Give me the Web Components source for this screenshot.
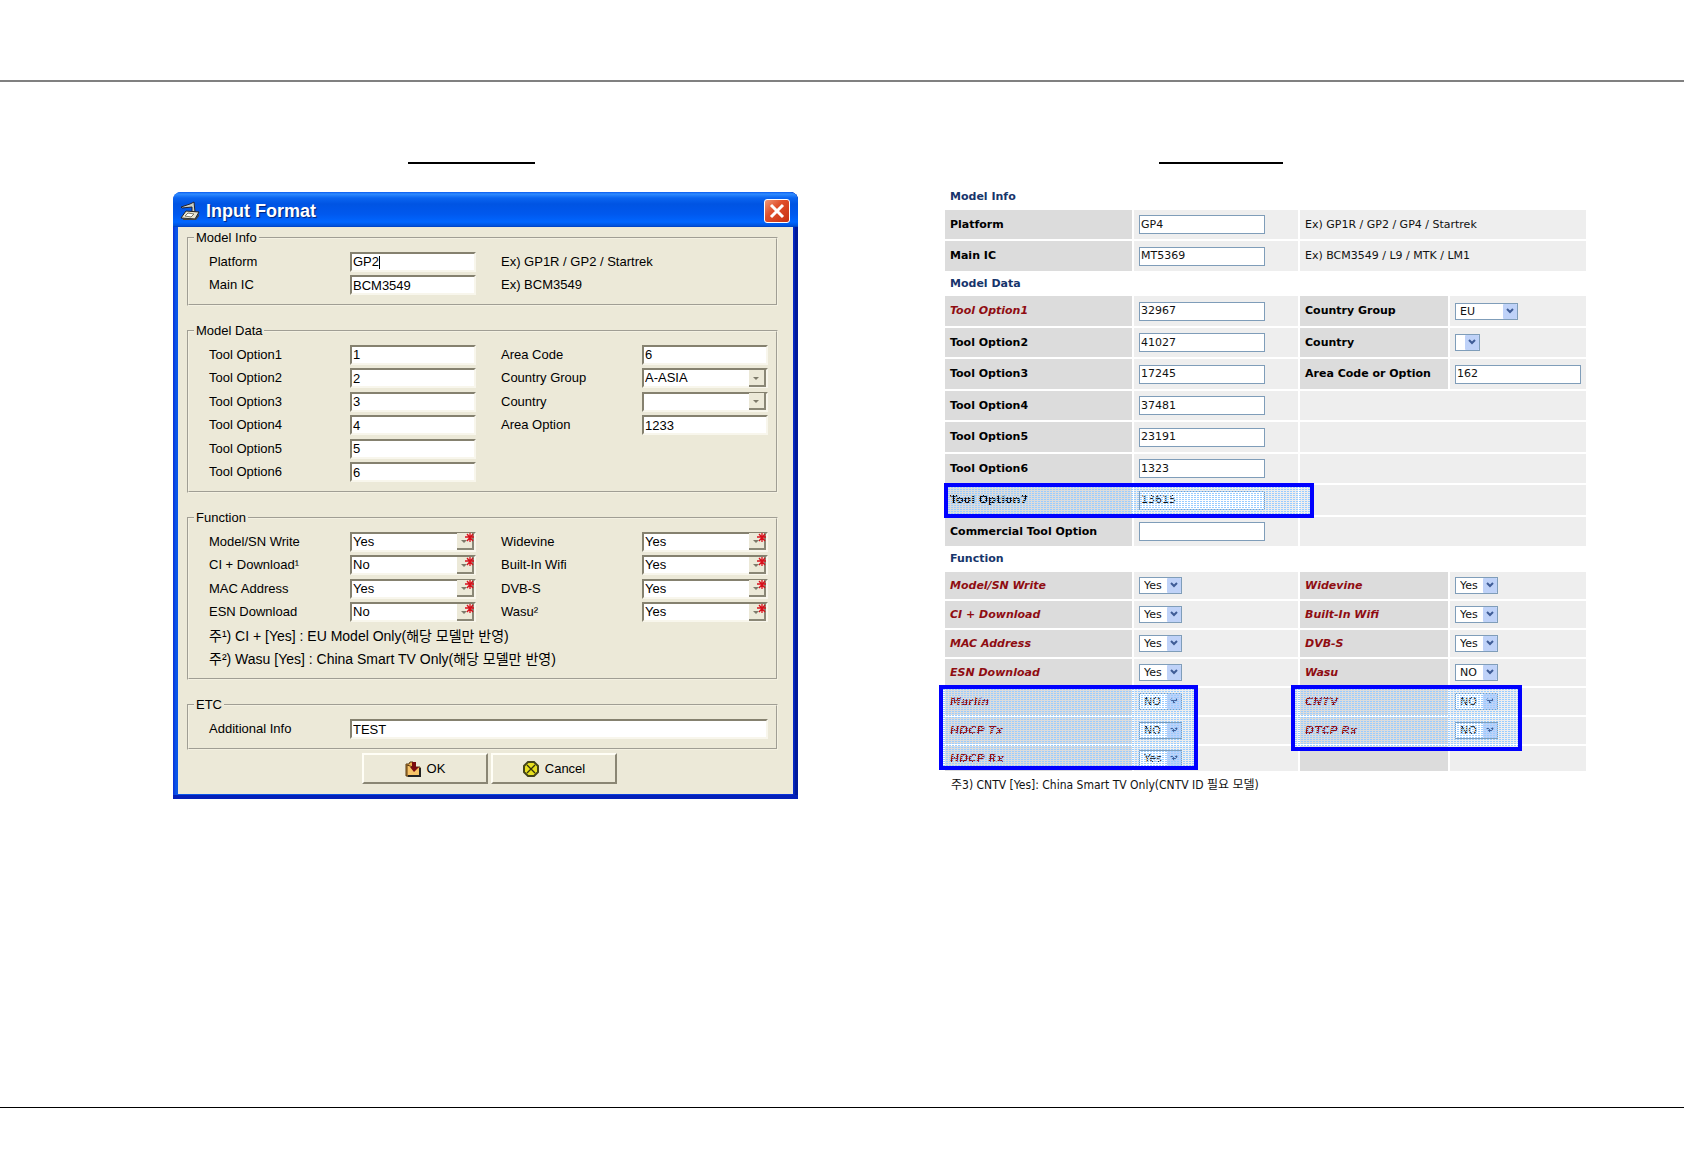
<!DOCTYPE html>
<html lang="ko">
<head>
<meta charset="utf-8">
<title>Input Format</title>
<style>
    body {
        margin: 0;
        background: #fff;
        font-family: "Liberation Sans", "Noto Sans CJK KR", sans-serif;
    }
</style>
</head>
<body>
<doc-page>
    <doc-figure style="--rule-start: 235px; --rule-width: 127px; --gap: 28px">
        <xp-window heading="Input Format">
            <xp-group legend="Model Info" rows="2">
                <xp-field label="Platform" value="GP2" caret></xp-field>
                <xp-note>Ex) GP1R / GP2 / Startrek</xp-note>
                <xp-field label="Main IC" value="BCM3549"></xp-field>
                <xp-note>Ex) BCM3549</xp-note>
            </xp-group>
            <xp-group legend="Model Data" rows="6">
                <xp-field label="Tool Option1" value="1"></xp-field>
                <xp-field label="Area Code" value="6"></xp-field>
                <xp-field label="Tool Option2" value="2"></xp-field>
                <xp-field label="Country Group" value="A-ASIA" type="select"></xp-field>
                <xp-field label="Tool Option3" value="3"></xp-field>
                <xp-field label="Country" value="" type="select"></xp-field>
                <xp-field label="Tool Option4" value="4"></xp-field>
                <xp-field label="Area Option" value="1233"></xp-field>
                <xp-field label="Tool Option5" value="5" class="alone"></xp-field>
                <xp-field label="Tool Option6" value="6" class="alone"></xp-field>
            </xp-group>
            <xp-group legend="Function" rows="6">
                <xp-field label="Model/SN Write" value="Yes" type="select" required></xp-field>
                <xp-field label="Widevine" value="Yes" type="select" required></xp-field>
                <xp-field label="CI + Download¹" value="No" type="select" required></xp-field>
                <xp-field label="Built-In Wifi" value="Yes" type="select" required></xp-field>
                <xp-field label="MAC Address" value="Yes" type="select" required></xp-field>
                <xp-field label="DVB-S" value="Yes" type="select" required></xp-field>
                <xp-field label="ESN Download" value="No" type="select" required></xp-field>
                <xp-field label="Wasu²" value="Yes" type="select" required></xp-field>
                <xp-note class="wide">주¹) CI + [Yes] : EU Model Only(해당 모델만 반영)</xp-note>
                <xp-note class="wide">주²) Wasu [Yes] : China Smart TV Only(해당 모델만 반영)</xp-note>
            </xp-group>
            <xp-group legend="ETC" rows="1">
                <xp-field label="Additional Info" value="TEST" class="wide"></xp-field>
            </xp-group>
            <xp-button slot="actions" icon="ok">OK</xp-button>
            <xp-button slot="actions" icon="cancel">Cancel</xp-button>
        </xp-window>
    </doc-figure>
    <doc-figure style="--rule-start: 216px; --rule-width: 124px; --gap: 20px">
        <option-sheet>주3) CNTV [Yes]: China Smart TV Only(CNTV ID 필요 모델)</option-sheet>
    </doc-figure>
</doc-page>

<script>
class DocPage extends HTMLElement {
    constructor() {
        super();
        this.attachShadow({ mode: 'open' });
    }

    connectedCallback() {
        this.shadowRoot.innerHTML = `
        <style>
            :host {
                display: flex;
                flex-direction: column;
                min-height: 100vh;
            }
            header {
                height: 80px;
                border-bottom: 2px solid #808080;
            }
            main {
                flex: 1;
                display: grid;
                grid-template-columns: 625fr 645fr;
                column-gap: 145px;
                align-items: start;
                padding: 80px 96px 0 173px;
            }
            footer {
                height: 58px;
                border-top: 1px solid #000;
            }
        </style>
        <header></header>
        <main><slot></slot></main>
        <footer></footer>
        `;
    }
}
customElements.define('doc-page', DocPage);

class DocFigure extends HTMLElement {
    constructor() {
        super();
        this.attachShadow({ mode: 'open' });
    }

    connectedCallback() {
        this.shadowRoot.innerHTML = `
        <style>
            :host {
                display: flex;
                flex-direction: column;
                gap: var(--gap);
                min-width: 0;
            }
            .rule {
                width: var(--rule-width);
                height: 2px;
                margin-left: var(--rule-start);
                background: #000;
            }
        </style>
        <div class="rule"></div>
        <slot></slot>
        `;
    }
}
customElements.define('doc-figure', DocFigure);

class XpWindow extends HTMLElement {
    constructor() {
        super();
        this.attachShadow({ mode: 'open' });
    }

    connectedCallback() {
        this.shadowRoot.innerHTML = `
        <style>
            :host {
                display: block;
                padding: 0 5px 5px;
                border-radius: 8px 8px 0 0;
                background: linear-gradient(90deg, #0831d9, #0a55e8 3px, #0a4ae0 50%, #0831d9 99%, #00138c);
                box-shadow: inset 0 -4px 0 #0420b8, inset -3px 0 0 #001a9c;
                overflow: hidden;
            }
            .bar {
                display: flex;
                align-items: center;
                gap: 6px;
                height: 35px;
                margin: 0 -5px;
                padding: 2px 8px 0 7px;
                box-sizing: border-box;
                background: linear-gradient(#0a5cf0, #2f8bff 2px, #0a64f0 6px, #0054e3 12px, #0058ee 22px, #0066ff 30px, #0050d8 34px, #003cb8);
            }
            h1 {
                flex: 1;
                margin: 0;
                font-size: 18px;
                line-height: 24px;
                color: #fff;
                text-shadow: 1px 1px 1px #00237a;
            }
            .close {
                display: grid;
                place-items: center;
                width: 26px;
                height: 24px;
                padding: 0;
                border: 1px solid #fff;
                border-radius: 3px;
                background: linear-gradient(135deg, #f09878, #e0502c 40%, #c83010);
            }
            svg {
                display: block;
            }
            .body {
                padding: 3px 15px 10px 9px;
                background: #ece9d8;
            }
            .groups {
                display: flex;
                flex-direction: column;
                gap: 17px;
            }
            .actions {
                display: flex;
                gap: 3px;
                margin-top: 3px;
                padding-left: 175px;
            }
        </style>
        <div class="bar">
            <svg width="20" height="20" viewBox="0 0 20 20">
                <path d="M1 6 L10 3 L14 1 L15 11 L12 11 L12 6 L2 7 Z" fill="#c8d0c8" stroke="#223" stroke-width="1"/>
                <path d="M1 17 L6 10 L19 11 L15 18 Z" fill="#e8e4d0" stroke="#222" stroke-width="1"/>
                <path d="M5 15 L8 12 L14 13 L11 16 Z" fill="#fff" stroke="#776" stroke-width="1"/>
                <path d="M3 17 L15 18 L19 13 V15 L16 19 H3 Z" fill="#444"/>
            </svg>
            <h1>${this.getAttribute('heading')}</h1>
            <button class="close" type="button" aria-label="Close">
                <svg width="16" height="16" viewBox="0 0 16 16">
                    <path d="M2 2 L14 14 M14 2 L2 14" stroke="#fff" stroke-width="3"/>
                </svg>
            </button>
        </div>
        <div class="body">
            <div class="groups"><slot></slot></div>
            <div class="actions"><slot name="actions"></slot></div>
        </div>
        `;
    }
}
customElements.define('xp-window', XpWindow);

class XpGroup extends HTMLElement {
    constructor() {
        super();
        this.attachShadow({ mode: 'open' });
    }

    connectedCallback() {
        const rows = Number(this.getAttribute('rows'));
        // two rows take 47px together
        const height = Math.ceil(rows * 47 / 2);
        this.shadowRoot.innerHTML = `
        <style>
            :host {
                display: block;
                font-size: 13px;
            }
            fieldset {
                min-width: 0;
                margin: 0;
                padding: 4px 8px 7px 20px;
                border: 2px groove #f4f1e2;
            }
            legend {
                height: 16px;
                margin-left: -15px;
                padding: 0 2px;
                line-height: 16px;
            }
            .rows {
                display: grid;
                grid-template-columns: 267fr 267fr;
                grid-template-rows: repeat(${rows}, 1fr);
                column-gap: 25px;
                align-items: center;
                height: ${height}px;
            }
            ::slotted(.alone) {
                grid-column: 1;
            }
            ::slotted(.wide) {
                grid-column: 1 / -1;
            }
        </style>
        <fieldset>
            <legend>${this.getAttribute('legend')}</legend>
            <div class="rows"><slot></slot></div>
        </fieldset>
        `;
    }
}
customElements.define('xp-group', XpGroup);

class XpNote extends HTMLElement {
    constructor() {
        super();
        this.attachShadow({ mode: 'open' });
    }

    connectedCallback() {
        this.shadowRoot.innerHTML = `
        <style>
            :host {
                display: block;
                line-height: 20px;
                white-space: nowrap;
            }
            :host(.wide) {
                font-size: 14px;
            }
        </style>
        <slot></slot>
        `;
    }
}
customElements.define('xp-note', XpNote);

class XpField extends HTMLElement {
    constructor() {
        super();
        this.attachShadow({ mode: 'open' });
    }

    control() {
        const value = this.getAttribute('value');
        if (this.getAttribute('type') !== 'select') {
            return `<input id="control" type="text" value="${value}">`;
        }
        return `
            <select id="control"><option>${value}</option></select>
            <svg class="drop" width="17" height="17" viewBox="0 0 17 17">
                <path d="M0 0 H17 V17 H0 Z" fill="#ece9d8"/>
                <path d="M0 16 H16 V0" fill="none" stroke="#8a8776" stroke-width="2"/>
                <path d="M4 7 H10 L7 10 Z" fill="#7d7a6a"/>
                ${this.hasAttribute('required') ? `
                <path d="M13 0 V9 M8 4 H17 M10 1 L16 8 M16 1 L10 8" stroke="#d8101c" stroke-width="1.3"/>` : ''}
            </svg>`;
    }

    connectedCallback() {
        this.shadowRoot.innerHTML = `
        <style>
            :host {
                display: grid;
                grid-template-columns: 141fr 126fr;
                align-items: center;
                line-height: 20px;
                white-space: nowrap;
            }
            :host(.wide) {
                grid-template-columns: 141fr 418fr;
            }
            .box {
                display: grid;
                position: relative;
                min-width: 0;
            }
            input, select {
                grid-area: 1 / 1;
                width: 100%;
                height: 20px;
                box-sizing: border-box;
                margin: 0;
                padding: 0 1px;
                border: 2px solid;
                border-color: #85816f #f8f6ec #f8f6ec #85816f;
                border-radius: 0;
                background: #fff;
                color: #000;
                font: inherit;
                line-height: 16px;
                appearance: none;
                outline: none;
            }
            .drop {
                grid-area: 1 / 1;
                justify-self: end;
                align-self: center;
                margin-right: 2px;
                pointer-events: none;
            }
            .caret {
                position: absolute;
                left: 29px;
                top: 4px;
                width: 1px;
                height: 13px;
                background: #000;
            }
        </style>
        <label for="control">${this.getAttribute('label')}</label>
        <div class="box">
            ${this.control()}
            ${this.hasAttribute('caret') ? '<span class="caret"></span>' : ''}
        </div>
        `;
    }
}
customElements.define('xp-field', XpField);

const ICONS = {
    ok: `
        <path d="M1 3 H4 L5 1 H8 V15 H1 Z" fill="#f0b050" stroke="#5a3a10" stroke-width="1"/>
        <path d="M2 4 L8 6 H15 V15 H2 Z" fill="#f8c468" stroke="#5a3a10" stroke-width="1"/>
        <path d="M15 7 V15 H3" fill="none" stroke="#222" stroke-width="2"/>
        <path d="M7 1 H11 V6 H14 L9 11 L5 6 H7 Z" fill="#7a0c10"/>`,
    cancel: `
        <path d="M5 1 H11 L15 5 V11 L11 15 H5 L1 11 V5 Z" fill="#e8e020" stroke="#45451a" stroke-width="2"/>
        <path d="M4 4 L12 12 M12 4 L4 12" stroke="#33330c" stroke-width="1.3"/>`
};

class XpButton extends HTMLElement {
    constructor() {
        super();
        this.attachShadow({ mode: 'open' });
    }

    connectedCallback() {
        this.shadowRoot.innerHTML = `
        <style>
            :host {
                display: block;
                flex: 0 1 126px;
            }
            button {
                display: flex;
                align-items: center;
                justify-content: center;
                gap: 6px;
                width: 100%;
                height: 31px;
                padding: 0;
                border: 2px solid;
                border-color: #fffef6 #8a8674 #8a8674 #fffef6;
                background: #ece9d8;
                color: #000;
                font: 13px "Liberation Sans", sans-serif;
            }
        </style>
        <button type="button">
            <svg width="16" height="16" viewBox="0 0 16 16">${ICONS[this.getAttribute('icon')]}</svg>
            <slot></slot>
        </button>
        `;
    }
}
customElements.define('xp-button', XpButton);

// [label, control, value, changed, size]
const INFO = [
    [['Platform', 'text', 'GP4'], 'Ex) GP1R / GP2 / GP4 / Startrek'],
    [['Main IC', 'text', 'MT5369'], 'Ex) BCM3549 / L9 / MTK / LM1']
];
const DATA = [
    [['Tool Option1', 'text', '32967', true], ['Country Group', 'select', 'EU', false, 'group']],
    [['Tool Option2', 'text', '41027'], ['Country', 'select', '', false, 'empty']],
    [['Tool Option3', 'text', '17245'], ['Area Code or Option', 'text', '162']],
    [['Tool Option4', 'text', '37481'], ''],
    [['Tool Option5', 'text', '23191'], ''],
    [['Tool Option6', 'text', '1323'], ''],
    [['Tool Option7', 'text', '13615'], ''],
    [['Commercial Tool Option', 'text', ''], '']
];
const FUNCTIONS = [
    [['Model/SN Write', 'select', 'Yes', true], ['Widevine', 'select', 'Yes', true]],
    [['CI + Download', 'select', 'Yes', true], ['Built-In Wifi', 'select', 'Yes', true]],
    [['MAC Address', 'select', 'Yes', true], ['DVB-S', 'select', 'Yes', true]],
    [['ESN Download', 'select', 'Yes', true], ['Wasu', 'select', 'NO', true]],
    [['Marlin', 'select', 'NO', true], ['CNTV', 'select', 'NO', true]],
    [['HDCP Tx', 'select', 'NO', true], ['DTCP Rx', 'select', 'NO', true]],
    [['HDCP Rx', 'select', 'Yes', true], null]
];

class OptionSheet extends HTMLElement {
    constructor() {
        super();
        this.attachShadow({ mode: 'open' });
    }

    pair([label, type, value, changed, size = '']) {
        const id = label.toLowerCase().replace(/[^a-z0-9]+/g, '-');
        const control = type === 'text'
            ? `<input id="${id}" type="text" value="${value}">`
            : `<span class="select ${size}">
                    <select id="${id}"><option>${value}</option></select>
                    <svg width="14" height="15" viewBox="0 0 14 15">
                        <rect width="14" height="15" rx="1" fill="#bfd2f8"/>
                        <path d="M4 5 L7 8 L10 5" fill="none" stroke="#3f5c96" stroke-width="2"/>
                    </svg>
                </span>`;
        return `
            <th scope="row" class="${changed ? 'changed' : ''}"><label for="${id}">${label}</label></th>
            <td>${control}</td>`;
    }

    row([left, right]) {
        let rest = '<th></th><td></td>';
        if (Array.isArray(right)) {
            rest = this.pair(right);
        } else if (right !== null) {
            rest = `<td colspan="2">${right}</td>`;
        }
        return `<tr>${this.pair(left)}${rest}</tr>`;
    }

    section(name, title, rows) {
        return `
            <tbody class="${name}">
                <tr class="title"><th colspan="4" scope="rowgroup">${title}</th></tr>
                ${rows.map(row => this.row(row)).join('')}
            </tbody>`;
    }

    connectedCallback() {
        this.shadowRoot.innerHTML = `
        <style>
            :host {
                display: block;
                position: relative;
                font: 11px/16px "DejaVu Sans", "Noto Sans CJK KR", sans-serif;
                color: #111;
            }
            table {
                width: 100%;
                table-layout: fixed;
                border-spacing: 2px;
            }
            .c1 { width: 187px; }
            .c2 { width: 164px; }
            .c3 { width: 148px; }
            th, td {
                height: 29px;
                padding: 0 5px;
                text-align: left;
                vertical-align: middle;
                white-space: nowrap;
            }
            th {
                background: #dcdcdc;
                color: #000;
            }
            td {
                background: #eee;
            }
            .data tr:nth-child(even) > *, .info tr:last-child > * {
                height: 30px;
            }
            .functions tr > * {
                height: 27px;
            }
            .functions tr:last-child > * {
                height: 25px;
            }
            tr.title > th {
                height: 22px;
                background: none;
                color: #17356b;
            }
            .data tr.title > th {
                height: 21px;
            }
            .changed {
                color: #8f0d12;
                font-style: italic;
            }
            input, select {
                display: block;
                box-sizing: border-box;
                margin: 0;
                border: 1px solid #7f9db9;
                border-radius: 0;
                background: #fff;
                color: #111;
                font: inherit;
                appearance: none;
                outline: none;
            }
            input {
                width: 126px;
                height: 19px;
                padding: 0 1px 1px;
            }
            .select {
                display: grid;
                width: 43px;
            }
            .select.group { width: 63px; }
            .select.empty { width: 25px; }
            select {
                grid-area: 1 / 1;
                width: 100%;
                height: 17px;
                padding: 0 0 0 4px;
                line-height: 15px;
            }
            .select svg {
                grid-area: 1 / 1;
                place-self: center end;
                margin-right: 1px;
                pointer-events: none;
            }
            p {
                margin: 2px 0 0 8px;
                font: 12px/20px "DejaVu Sans Condensed", "Noto Sans CJK KR", sans-serif;
            }
            /* markers laid over the rows that are new in this version */
            .mark {
                position: absolute;
                box-sizing: border-box;
                border: 4px solid #00f;
                pointer-events: none;
            }
            .mark::before {
                content: "";
                position: absolute;
                inset: 0;
                background: repeating-linear-gradient(90deg, #9cf 0 2px, transparent 2px 3px);
                mask-image: repeating-linear-gradient(#000 0 1px, transparent 1px 2px);
            }
            .option7 { left: 1px; top: 299px; width: 370px; height: 35px; }
            .marlin { left: -4px; top: 501px; width: 259px; height: 85px; }
            .cntv { left: 348px; top: 501px; width: 231px; height: 66px; }
        </style>
        <table>
            <colgroup><col class="c1"><col class="c2"><col class="c3"><col></colgroup>
            ${this.section('info', 'Model Info', INFO)}
            ${this.section('data', 'Model Data', DATA)}
            ${this.section('functions', 'Function', FUNCTIONS)}
        </table>
        <p><slot></slot></p>
        <div class="mark option7"></div>
        <div class="mark marlin"></div>
        <div class="mark cntv"></div>
        `;
    }
}
customElements.define('option-sheet', OptionSheet);
</script>
</body>
</html>
